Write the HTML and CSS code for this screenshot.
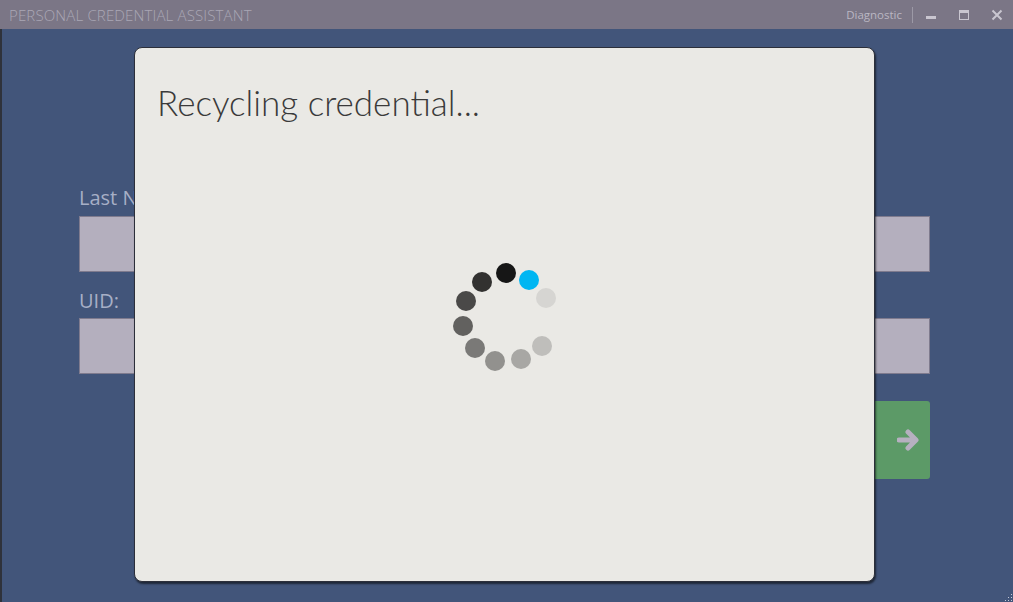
FILE: index.html
```html
<!DOCTYPE html>
<html lang="en">
<head>
    <meta charset="UTF-8">
    <title>Personal Credential Assistant</title>
    <link rel="stylesheet" href="styles.css">
</head>
<body>
    <div class="window">
        <!-- Barra de título -->
        <div class="titlebar">
            <span class="app-name">PERSONAL CREDENTIAL ASSISTANT</span>
            <div class="title-actions">
                <span class="diag">Diagnostic</span>
                <span class="sep"></span>
                <button class="win-btn">
                    <svg width="12" height="12" viewBox="0 0 12 12"><rect x="1" y="7" width="10" height="3" fill="#c9c6d0"/></svg>
                </button>
                <button class="win-btn">
                    <svg width="12" height="12" viewBox="0 0 12 12"><rect x="1.5" y="1.5" width="9" height="9" fill="none" stroke="#c9c6d0" stroke-width="1"/><rect x="1" y="1" width="10" height="3" fill="#c9c6d0"/></svg>
                </button>
                <button class="win-btn">
                    <svg width="12" height="12" viewBox="0 0 12 12"><path d="M1.5 1.5 L10.5 10.5 M10.5 1.5 L1.5 10.5" stroke="#c9c6d0" stroke-width="2"/></svg>
                </button>
            </div>
        </div>

        <div class="content">
            <!-- Formulario de fondo -->
            <div class="form">
                <label class="field-label">Last Name:</label>
                <div class="field"></div>
                <label class="field-label second">UID:</label>
                <div class="field"></div>
                <button class="go-btn">
                    <svg width="24" height="22" viewBox="0 0 24 22"><path d="M2 11 H18 M11 3 L19 11 L11 19" fill="none" stroke="#b6b0c0" stroke-width="5" stroke-linecap="round" stroke-linejoin="round"/></svg>
                </button>
            </div>

            <!-- Diálogo -->
            <div class="dialog">
                <h1 class="dialog-title">Recycling credential...</h1>
                <div class="spinner">
                    <span class="dot" style="--x:2px;--y:-44px;background:#161616"></span>
                    <span class="dot" style="--x:25px;--y:-37px;background:#00b6f2"></span>
                    <span class="dot" style="--x:42px;--y:-19px;background:#d6d5d2"></span>
                    <span class="dot" style="--x:38px;--y:29px;background:#bfbebb"></span>
                    <span class="dot" style="--x:17px;--y:42px;background:#a8a7a4"></span>
                    <span class="dot" style="--x:-9px;--y:44px;background:#92918e"></span>
                    <span class="dot" style="--x:-29px;--y:31px;background:#7a7977"></span>
                    <span class="dot" style="--x:-41px;--y:9px;background:#62615f"></span>
                    <span class="dot" style="--x:-38px;--y:-16px;background:#4a4948"></span>
                    <span class="dot" style="--x:-22px;--y:-35px;background:#323130"></span>
                </div>
            </div>

            <div class="grip"></div>
        </div>
    </div>
</body>
</html>
```

FILE: styles.css
```css
html, body {
    margin: 0;
    padding: 0;
    height: 100%;
}
body {
    font-family: 'Open Sans', 'Noto Sans', sans-serif;
    background-color: #42557a;
    overflow: hidden;
}
.window {
    display: flex;
    flex-direction: column;
    height: 100vh;
}
.titlebar {
    height: 29px;
    background-color: #7b7686;
    display: flex;
    align-items: center;
    justify-content: space-between;
    padding-left: 9px;
    flex-shrink: 0;
}
.app-name {
    font-size: 15px;
    font-weight: 300;
    color: #aaa7b5;
    letter-spacing: 0.15px;
}
.title-actions {
    display: flex;
    align-items: center;
    height: 100%;
}
.diag {
    font-size: 11.5px;
    color: #bab7c3;
    margin-right: 10px;
}
.sep {
    width: 1px;
    height: 16px;
    background-color: #9c99a6;
    margin-right: 1px;
}
.win-btn {
    width: 33px;
    height: 29px;
    border: none;
    background: transparent;
    padding: 0;
    display: flex;
    align-items: center;
    justify-content: center;
}
.content {
    flex: 1;
    position: relative;
    border-left: 2px solid #2f323b;
}
.form {
    display: flex;
    flex-direction: column;
    padding: 154px 83px 0 77px;
}
.field-label {
    font-size: 20px;
    line-height: 30px;
    color: #a7afc6;
    margin-bottom: 3px;
}
.field-label.second {
    margin-top: 14px;
    margin-bottom: 2px;
}
.field {
    height: 54px;
    background-color: #b4afbe;
    border: 1px solid #7f7b8e;
}
.go-btn {
    align-self: flex-end;
    margin-top: 27px;
    width: 140px;
    height: 78px;
    border: none;
    border-radius: 3px;
    background-color: #5c9a67;
    display: flex;
    align-items: center;
    justify-content: flex-end;
    padding-right: 9px;
}
.dialog {
    position: absolute;
    left: 132px;
    top: 18px;
    width: 739px;
    height: 533px;
    background-color: #eae9e5;
    border: 1px solid #2c2f3a;
    border-radius: 8px;
    box-shadow: 1px 2px 2px rgba(0, 0, 0, 0.55);
}
.dialog-title {
    margin: 0;
    padding: 33px 0 0 22px;
    font-family: 'Lato', sans-serif;
    font-weight: 300;
    font-size: 35px;
    color: #3a3a3a;
}
.spinner {
    position: absolute;
    left: 369px;
    top: 269px;
    width: 0;
    height: 0;
}
.dot {
    position: absolute;
    left: -10px;
    top: -10px;
    width: 20px;
    height: 20px;
    border-radius: 50%;
    transform: translate(var(--x), var(--y));
}
.grip {
    position: absolute;
    right: 1px;
    bottom: 1px;
    width: 8px;
    height: 8px;
    background-image: radial-gradient(circle, #c6c9d6 0.8px, transparent 1px);
    background-size: 3px 3px;
    clip-path: polygon(100% 0, 100% 100%, 0 100%);
}
```
